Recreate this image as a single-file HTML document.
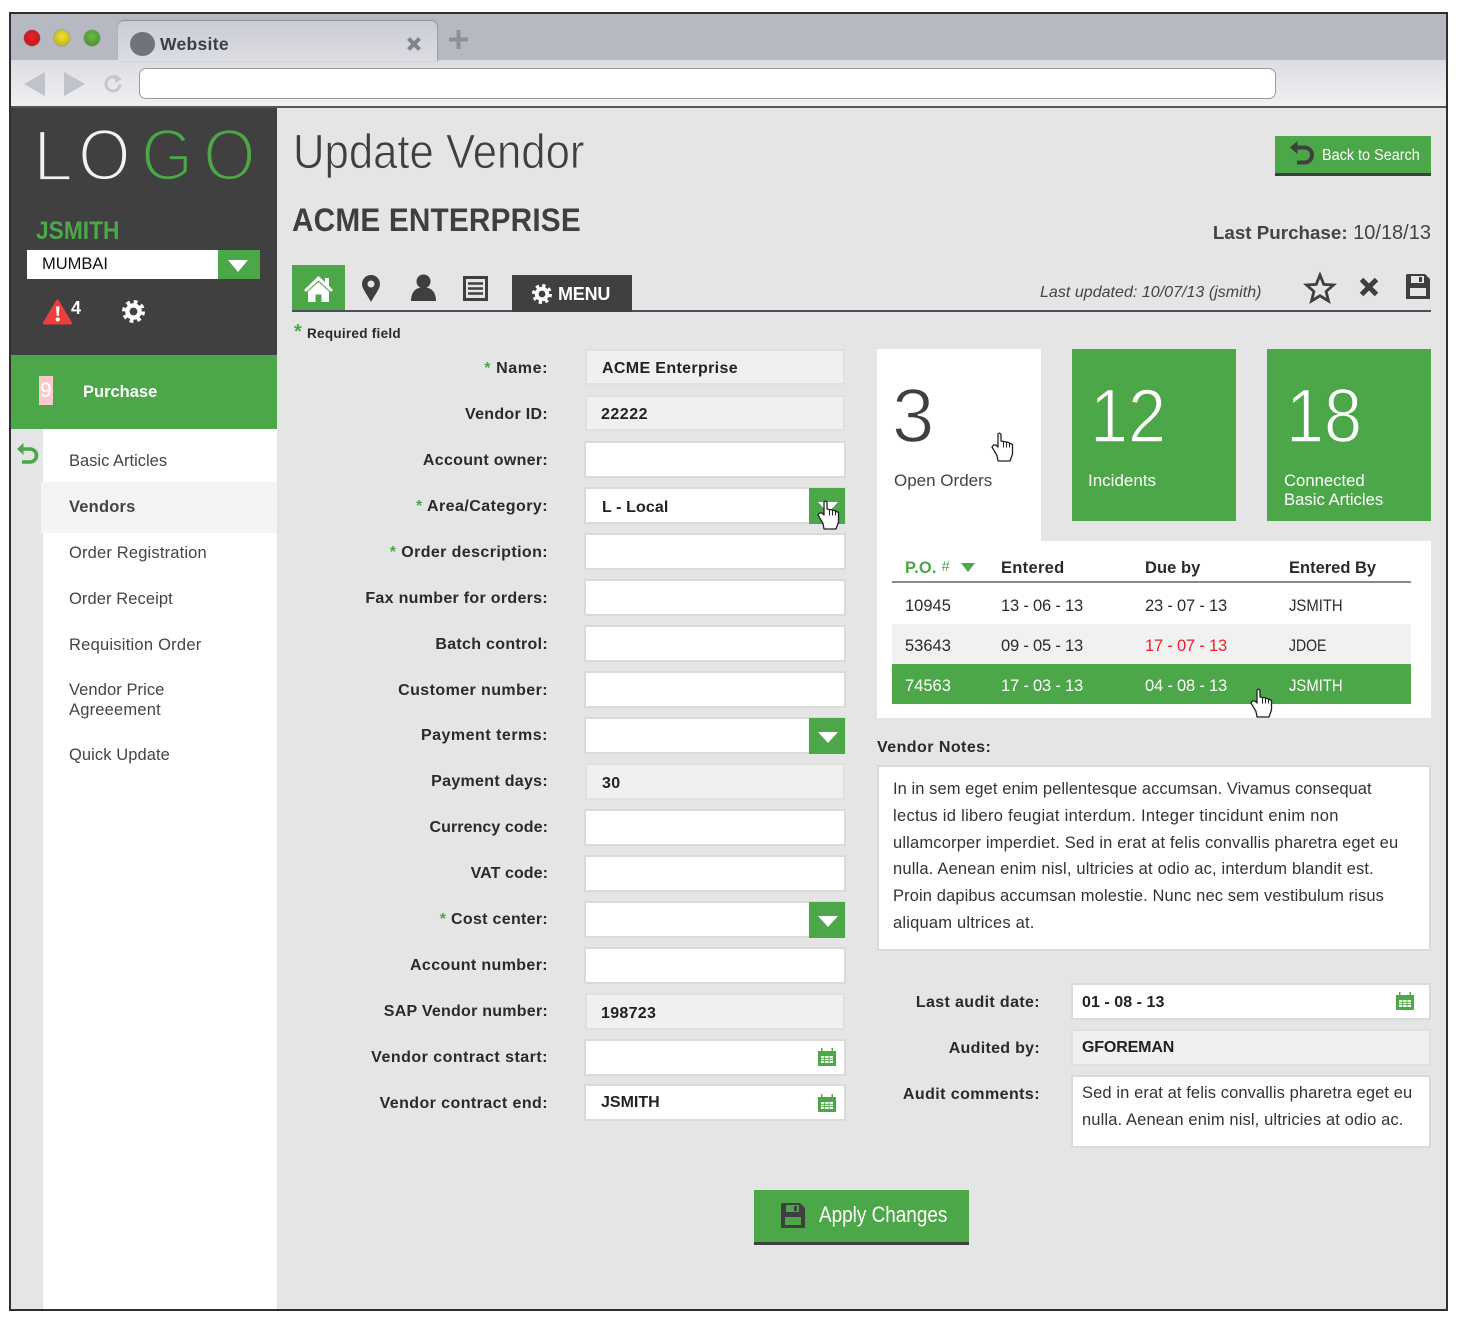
<!DOCTYPE html>
<html lang="en"><head><meta charset="utf-8"><title>Update Vendor</title>
<style>
*{box-sizing:border-box}
html,body{margin:0;padding:0;background:#fff}
body{width:1458px;height:1320px;position:relative;overflow:hidden;font-family:"Liberation Sans",sans-serif;color:#222}
.a,.t,.l,.f,.fv{position:absolute}
.t{white-space:nowrap;line-height:20px;font-size:16px;transform-origin:0 50%}
.b{font-weight:700}
.l{white-space:nowrap;line-height:20px;font-size:16px;font-weight:700;text-align:right;right:910px;color:#2a2a2a;letter-spacing:.3px;margin-top:2px}
.l i{color:#4ca748;font-style:normal}
.f{left:584px;width:262px;height:37px;background:#fff;border:2px solid #dadada}
.f.r{background:#f0f0f0;border:2px solid #e0e0e0;left:585px;width:260px}
.fv{left:602px;white-space:nowrap;line-height:20px;font-size:16px;font-weight:700;color:#222;letter-spacing:.3px;margin-top:2px}
.dd{position:absolute;left:809px;width:36px;height:36px;background:#4ca748}
.dd:after{content:"";position:absolute;left:9px;top:14px;border-left:10px solid transparent;border-right:10px solid transparent;border-top:11px solid #fff}
.m{position:absolute;left:69px;white-space:nowrap;line-height:20px;font-size:16.5px;color:#444;margin-top:1px}
.n{position:absolute;left:893px;white-space:nowrap;line-height:20px;font-size:16.5px;color:#333;margin-top:1px}
.c{position:absolute;white-space:nowrap;line-height:20px;font-size:16.5px;color:#2a2a2a;margin-top:1px;transform-origin:0 50%}
.d{letter-spacing:-.2px}
svg{position:absolute;overflow:visible}
</style></head><body>
<svg width="0" height="0" style="position:absolute"><defs>
<g id="hand"><path d="M7 2V15L5 13H2.500L1 15L6 23.500L7 29H19L21.500 22V12.500L18.500 11L15.500 10L12.500 9.500L10 9V2.500Q8.500 0 7 2Z" fill="#fff" stroke="#222" stroke-width="1.300" stroke-linejoin="round"/><path d="M12.500 9.500V15.500M15.500 10V15.500M18.500 11V15.500" fill="none" stroke="#222" stroke-width="1"/></g>
<g id="gear"><circle cx="10" cy="10" r="5.300" fill="none" stroke="currentColor" stroke-width="3.800"/><circle cx="10" cy="10" r="8.300" fill="none" stroke="currentColor" stroke-width="3.400" stroke-dasharray="3.200 3.320"/></g>
<g id="save"><path fill-rule="evenodd" d="M1 0H19L24 5V25H0V1ZM4 14V22H20V14ZM5 2V9H18V2ZM13 3H16V8H13Z" fill="currentColor"/></g>
<g id="cal"><path d="M0 3H3V0H4.500V3H13.500V0H15V3H18V18H0Z" fill="#4ca748"/><path d="M3 8H15V15H3Z" fill="#fff"/><path d="M3 10.300H15M3 12.600H15M6.700 8V15M11 8V15" stroke="#4ca748" stroke-width=".9"/></g>
</defs></svg>

<!-- window frame -->
<div class="a" style="left:9px;top:12px;width:1439px;height:1299px;background:#e5e5e5;border:2px solid #2f2f2f;border-top-width:2px"></div>
<div class="a" style="left:11px;top:14px;width:1435px;height:47px;background:#b6b9c2"></div>
<div class="a" style="left:11px;top:60px;width:1435px;height:47px;background:linear-gradient(#dcdde3,#f1f1f3)"></div>
<div class="a" style="left:11px;top:106px;width:1435px;height:2px;background:#555"></div>
<div class="a" style="left:118px;top:21px;width:319px;height:40px;border-radius:6px 6px 0 0;background:linear-gradient(#cbccd4,#dcdde3);box-shadow:0 -1px 1px #8c8f99,1px 0 1px #999ca5"></div>
<div class="a" style="left:24px;top:30px;width:16px;height:16px;border-radius:50%;background:radial-gradient(circle at 50% 40%,#e8232a,#b91419);box-shadow:0 0 1px #444"></div>
<div class="a" style="left:54px;top:30px;width:16px;height:16px;border-radius:50%;background:radial-gradient(circle at 50% 40%,#eee22f,#b9a514);box-shadow:0 0 1px #444"></div>
<div class="a" style="left:84px;top:30px;width:16px;height:16px;border-radius:50%;background:radial-gradient(circle at 50% 40%,#6dbb45,#3c8a2b);box-shadow:0 0 1px #444"></div>
<div class="a" style="left:130px;top:32px;width:25px;height:24px;border-radius:50%;background:#6e737c"></div>
<div class="t b" style="left:160px;top:34px;font-size:17.500px;color:#3d3f48;letter-spacing:.3px">Website</div>
<svg style="left:407px;top:37px" width="14" height="14"><path d="M1.500 1.500L12.500 12.500M12.500 1.500L1.500 12.500" stroke="#80838a" stroke-width="4"/></svg>
<svg style="left:449px;top:30px" width="20" height="20"><path d="M9.500 0V19M0 9.500H19" stroke="#8d9099" stroke-width="4"/></svg>
<svg style="left:24px;top:72px" width="62" height="25"><path d="M21 0V24L0 12ZM40 0V24L61 12Z" fill="#c0c3cb"/></svg>
<svg style="left:104px;top:74px" width="20" height="20"><path d="M13.500 4.500A7 7 0 1 0 16 10" fill="none" stroke="#c6c8ce" stroke-width="3"/><path d="M11 0L18 5L11 9Z" fill="#c6c8ce"/></svg>
<div class="a" style="left:139px;top:68px;width:1137px;height:31px;background:#fff;border:1.500px solid #9a9a98;border-radius:7px"></div>

<!-- sidebar -->
<div class="a" style="left:11px;top:108px;width:266px;height:247px;background:#404040"></div>
<div class="a" style="left:11px;top:355px;width:266px;height:74px;background:#4ca748"></div>
<div class="a" style="left:11px;top:429px;width:32px;height:880px;background:#e4e5e7"></div>
<div class="a" style="left:43px;top:429px;width:234px;height:880px;background:#fff"></div>
<div class="a" style="left:41px;top:482px;width:236px;height:51px;background:#f4f4f4"></div>

<svg style="left:0;top:0" width="290" height="200" font-family="Liberation Sans" font-size="72" stroke-width="2.800">
<text transform="translate(33,180.500) scale(1,1)" fill="#f2f2f2" stroke="#404040">L</text>
<text transform="translate(78,180) scale(.94,1)" fill="#f2f2f2" stroke="#404040">O</text>
<text transform="translate(141,180) scale(.93,1)" fill="#4ca748" stroke="#404040">G</text>
<text transform="translate(203,180) scale(.94,1)" fill="#4ca748" stroke="#404040">O</text>
</svg>
<div class="t b" style="left:36px;top:221px;font-size:25px;color:#4ca748;transform:scaleX(.91)">JSMITH</div>
<div class="a" style="left:27px;top:250px;width:191px;height:29px;background:#fff"></div>
<div class="a" style="left:218px;top:250px;width:42px;height:29px;background:#4ca748"></div>
<div class="a" style="left:228px;top:260px;border-left:10.500px solid transparent;border-right:10.500px solid transparent;border-top:12px solid #fff"></div>
<div class="t" style="left:42px;top:254px;font-size:16.500px;color:#111">MUMBAI</div>
<svg style="left:43px;top:299px" width="30" height="28"><path d="M14.500 2L27.500 24H1.500Z" fill="#ec3f3c" stroke="#ec3f3c" stroke-width="3" stroke-linejoin="round"/><path d="M13 7.500H16.500L15.700 17H13.800Z" fill="#fff"/><circle cx="14.700" cy="20.500" r="2" fill="#fff"/></svg>
<div class="t b" style="left:71px;top:298px;font-size:18px;color:#fff">4</div>
<svg style="left:122px;top:300px;color:#fff" width="23" height="23" viewBox="0 0 20 20"><use href="#gear"/></svg>
<div class="a" style="left:39px;top:376px;width:14px;height:29px;background:#fcc9cb"></div>
<div class="t" style="left:40px;top:380px;font-size:21px;color:#fff;line-height:22px">9</div>
<div class="t b" style="left:83px;top:382px;font-size:16.500px;color:#fff">Purchase</div>
<svg style="left:17px;top:443px" width="21" height="22"><path d="M5 6H13A6.300 6.300 0 0 1 13 19H5" fill="none" stroke="#4ca748" stroke-width="3.600"/><path d="M0 6L6.500 0V12Z" fill="#4ca748"/></svg>
<div class="m" style="top:450px">Basic Articles</div>
<div class="m b" style="top:496px;letter-spacing:.2px">Vendors</div>
<div class="m" style="top:542px;letter-spacing:.17px">Order Registration</div>
<div class="m" style="top:588px;letter-spacing:.08px">Order Receipt</div>
<div class="m" style="top:634px;letter-spacing:.24px">Requisition Order</div>
<div class="m" style="top:679px;letter-spacing:.08px">Vendor Price</div>
<div class="m" style="top:699px;letter-spacing:.2px">Agreeement</div>
<div class="m" style="top:744px;letter-spacing:.08px">Quick Update</div>

<!-- header -->
<div class="t" style="left:293px;top:126px;line-height:54px;font-size:48px;color:#3f3f3f;-webkit-text-stroke:.8px #e5e5e5;transform:scaleX(.91)">Update Vendor</div>
<div class="t b" style="left:292px;top:200px;line-height:40px;font-size:32px;color:#3f3f3f;letter-spacing:.2px;transform:scaleX(.93)">ACME ENTERPRISE</div>
<div class="a" style="left:1275px;top:136px;width:156px;height:40px;background:#4ca748;border-bottom:3px solid #3e3e3e"></div>
<svg style="left:1290px;top:141px" width="24" height="25"><path d="M6 6.500H14.500A7.500 7.500 0 0 1 14.500 21.500H7" fill="none" stroke="#3f3f3f" stroke-width="4"/><path d="M0 6.500L7.500 0V13Z" fill="#3f3f3f"/></svg>
<div class="t" style="left:1322px;top:146px;font-size:15.500px;color:#fff;transform:scaleX(.93)">Back to Search</div>
<div class="t" style="right:27px;top:223px;font-size:20px;color:#444"><span class="b" style="font-size:18.800px">Last Purchase:</span> 10/18/13</div>

<!-- tabs -->
<div class="a" style="left:292px;top:265px;width:53px;height:46px;background:#4ca748"></div>
<svg style="left:304px;top:275px" width="29" height="27"><path d="M0 15L14.500 1L21 7V3H25V11L29 15L27 17L14.500 5.500L2 17Z" fill="#fff"/><path d="M4 16.500L14.500 7L25 16.500V27H17.500V19.500H11.500V27H4Z" fill="#fff"/></svg>
<svg style="left:362px;top:275px" width="18" height="27"><path fill-rule="evenodd" d="M9 0A9 9 0 0 1 18 9C18 14 12 21 9 27C6 21 0 14 0 9A9 9 0 0 1 9 0ZM9 5.500A3.500 3.500 0 1 0 9.010 5.500Z" fill="#3f3f3f"/></svg>
<svg style="left:411px;top:274px" width="25" height="27"><circle cx="12.500" cy="7.500" r="7" fill="#3f3f3f"/><path d="M0 27C0 20 3 15 8 14H17C22 15 25 20 25 27Z" fill="#3f3f3f"/></svg>
<svg style="left:463px;top:276px" width="25" height="25"><rect width="25" height="25" fill="#3f3f3f"/><rect x="3" y="3" width="19" height="19" fill="#e5e5e5"/><path d="M5 7.500H20M5 12.500H20M5 17.500H20" stroke="#3f3f3f" stroke-width="2.400"/></svg>
<div class="a" style="left:292px;top:310px;width:1139px;height:2px;background:#4a4f60"></div>
<div class="a" style="left:512px;top:275px;width:120px;height:37px;background:#404040"></div>
<svg style="left:532px;top:284px;color:#fff" width="20" height="20" viewBox="0 0 20 20"><use href="#gear"/></svg>
<div class="t b" style="left:558px;top:284px;font-size:18px;color:#fff;letter-spacing:-.2px">MENU</div>
<div class="t" style="left:1040px;top:283px;font-size:16px;font-style:italic;color:#444;letter-spacing:.03px">Last updated: 10/07/13 (jsmith)</div>
<svg style="left:1304px;top:272px" width="32" height="31"><path d="M16 3L19.800 12.400L29.500 13L22.100 19.500L24.500 29L16 23.800L7.500 29L9.900 19.500L2.500 13L12.200 12.400Z" fill="none" stroke="#3f3f3f" stroke-width="2.800" stroke-linejoin="miter"/></svg>
<svg style="left:1359px;top:277px" width="20" height="20"><path d="M2.500 2.500L17.500 17.500M17.500 2.500L2.500 17.500" stroke="#3f3f3f" stroke-width="5"/></svg>
<svg style="left:1406px;top:274px;color:#3f3f3f" width="25" height="25"><use href="#save"/></svg>

<div class="t b" style="left:294px;top:322px;font-size:20px;color:#4ca748">*</div>
<div class="t b" style="left:307px;top:324px;font-size:13.500px;color:#2a2a2a;letter-spacing:.28px">Required field</div>

<!-- form -->
<div class="l" style="top:357px;letter-spacing:.6px"><i>*</i> Name:</div>
<div class="f r" style="top:349px;height:36px"></div><div class="fv" style="top:357px;letter-spacing:.35px">ACME Enterprise</div>
<div class="l" style="top:403px">Vendor ID:</div>
<div class="f r" style="top:395px;height:36px"></div><div class="fv" style="top:403px;left:601px;letter-spacing:.5px">22222</div>
<div class="l" style="top:449px">Account owner:</div>
<div class="f" style="top:441px"></div>
<div class="l" style="top:495px;letter-spacing:.45px"><i>*</i> Area/Category:</div>
<div class="f" style="top:487px"></div><div class="fv" style="top:496px;letter-spacing:.1px">L - Local</div><div class="dd" style="top:488px"></div>
<div class="l" style="top:541px;letter-spacing:.4px"><i>*</i> Order description:</div>
<div class="f" style="top:533px"></div>
<div class="l" style="top:587px">Fax number for orders:</div>
<div class="f" style="top:579px"></div>
<div class="l" style="top:633px">Batch control:</div>
<div class="f" style="top:625px"></div>
<div class="l" style="top:679px;letter-spacing:.42px">Customer number:</div>
<div class="f" style="top:671px"></div>
<div class="l" style="top:724px;letter-spacing:.5px">Payment terms:</div>
<div class="f" style="top:717px"></div><div class="dd" style="top:718px"></div>
<div class="l" style="top:770px">Payment days:</div>
<div class="f r" style="top:763px"></div><div class="fv" style="top:772px">30</div>
<div class="l" style="top:816px;letter-spacing:.08px">Currency code:</div>
<div class="f" style="top:809px"></div>
<div class="l" style="top:862px;letter-spacing:.07px">VAT code:</div>
<div class="f" style="top:855px"></div>
<div class="l" style="top:908px"><i>*</i> Cost center:</div>
<div class="f" style="top:901px"></div><div class="dd" style="top:902px"></div>
<div class="l" style="top:954px;letter-spacing:.37px">Account number:</div>
<div class="f" style="top:947px"></div>
<div class="l" style="top:1000px;letter-spacing:.25px">SAP Vendor number:</div>
<div class="f r" style="top:993px"></div><div class="fv" style="top:1002px;left:601px">198723</div>
<div class="l" style="top:1046px;letter-spacing:.48px">Vendor contract start:</div>
<div class="f" style="top:1039px"></div>
<svg style="left:818px;top:1048px" width="18" height="18"><use href="#cal"/></svg>
<div class="l" style="top:1092px;letter-spacing:.42px">Vendor contract end:</div>
<div class="f" style="top:1084px"></div><div class="fv" style="top:1091px;left:601px;letter-spacing:0">JSMITH</div>
<svg style="left:818px;top:1094px" width="18" height="18"><use href="#cal"/></svg>
<svg style="left:817px;top:500px" width="26" height="32"><use href="#hand"/></svg>

<!-- tiles -->
<div class="a" style="left:877px;top:349px;width:164px;height:193px;background:#fff"></div>
<div class="a" style="left:1072px;top:349px;width:164px;height:172px;background:#4ca748"></div>
<div class="a" style="left:1267px;top:349px;width:164px;height:172px;background:#4ca748"></div>
<div class="t" style="left:892px;top:377px;line-height:80px;font-size:76px;color:#3f3f3f;-webkit-text-stroke:1.500px #fff">3</div>
<div class="t" style="left:1090px;top:377px;line-height:80px;font-size:76px;color:#fff;-webkit-text-stroke:1.500px #4ca748;transform:scaleX(.9)">12</div>
<div class="t" style="left:1286px;top:377px;line-height:80px;font-size:76px;color:#fff;-webkit-text-stroke:1.500px #4ca748;transform:scaleX(.9)">18</div>
<div class="t" style="left:894px;top:471px;font-size:17px;color:#444">Open Orders</div>
<div class="t" style="left:1088px;top:471px;font-size:17px;color:#fff">Incidents</div>
<div class="t" style="left:1284px;top:471px;font-size:16.700px;color:#fff;line-height:19px">Connected<br>Basic Articles</div>
<svg style="left:991px;top:432px" width="24" height="30"><use href="#hand"/></svg>

<!-- table -->
<div class="a" style="left:877px;top:541px;width:554px;height:177px;background:#fff"></div>
<div class="c b" style="left:905px;top:557px;color:#4ca748;letter-spacing:.2px">P.O. <span style="font-size:15px;position:relative;top:-2px;font-weight:400">#</span></div>
<div class="a" style="left:961px;top:563px;border-left:7.500px solid transparent;border-right:7.500px solid transparent;border-top:9px solid #4ca748"></div>
<div class="c b" style="left:1001px;top:557px;letter-spacing:.3px">Entered</div>
<div class="c b" style="left:1145px;top:557px;letter-spacing:.05px">Due by</div>
<div class="c b" style="left:1289px;top:557px;letter-spacing:0">Entered By</div>
<div class="a" style="left:892px;top:581px;width:519px;height:2px;background:#8a8a8a"></div>
<div class="a" style="left:892px;top:624px;width:519px;height:40px;background:#f1f1f1"></div>
<div class="a" style="left:892px;top:664px;width:519px;height:40px;background:#4ca748"></div>
<div class="c" style="left:905px;top:595px">10945</div><div class="c d" style="left:1001px;top:595px">13 - 06 - 13</div><div class="c d" style="left:1145px;top:595px">23 - 07 - 13</div><div class="c" style="left:1289px;top:595px;transform:scaleX(.9)">JSMITH</div>
<div class="c" style="left:905px;top:635px">53643</div><div class="c d" style="left:1001px;top:635px">09 - 05 - 13</div><div class="c d" style="left:1145px;top:635px;color:#e8202c">17 - 07 - 13</div><div class="c" style="left:1289px;top:635px;transform:scaleX(.85)">JDOE</div>
<div class="c" style="left:905px;top:675px;color:#fff">74563</div><div class="c d" style="left:1001px;top:675px;color:#fff">17 - 03 - 13</div><div class="c d" style="left:1145px;top:675px;color:#fff">04 - 08 - 13</div><div class="c" style="left:1289px;top:675px;color:#fff;transform:scaleX(.9)">JSMITH</div>
<svg style="left:1250px;top:688px" width="24" height="30"><use href="#hand"/></svg>

<!-- notes -->
<div class="t b" style="left:877px;top:738px;color:#2a2a2a;letter-spacing:.45px">Vendor Notes:</div>
<div class="a" style="left:877px;top:765px;width:554px;height:186px;background:#fff;border:2px solid #dadada"></div>
<div class="n" style="top:778px;letter-spacing:.065px">In in sem eget enim pellentesque accumsan. Vivamus consequat</div>
<div class="n" style="top:805px;letter-spacing:.3px">lectus id libero feugiat interdum. Integer tincidunt enim non</div>
<div class="n" style="top:832px;letter-spacing:.17px">ullamcorper imperdiet. Sed in erat at felis convallis pharetra eget eu</div>
<div class="n" style="top:858px;letter-spacing:.18px">nulla. Aenean enim nisl, ultricies at odio ac, interdum blandit est.</div>
<div class="n" style="top:885px;letter-spacing:.11px">Proin dapibus accumsan molestie. Nunc nec sem vestibulum risus</div>
<div class="n" style="top:912px;letter-spacing:.2px">aliquam ultrices at.</div>

<!-- audit -->
<div class="l" style="top:991px;right:418px;letter-spacing:.37px">Last audit date:</div>
<div class="a" style="left:1071px;top:983px;width:360px;height:37px;background:#fff;border:2px solid #dadada"></div>
<div class="fv" style="left:1082px;top:991px;letter-spacing:.05px">01 - 08 - 13</div>
<svg style="left:1396px;top:992px" width="18" height="18"><use href="#cal"/></svg>
<div class="l" style="top:1037px;right:418px">Audited by:</div>
<div class="a" style="left:1071px;top:1029px;width:360px;height:37px;background:#f0f0f0;border:2px solid #e0e0e0"></div>
<div class="fv" style="left:1082px;top:1036px;letter-spacing:-.15px">GFOREMAN</div>
<div class="l" style="top:1083px;right:418px;letter-spacing:.43px">Audit comments:</div>
<div class="a" style="left:1071px;top:1075px;width:360px;height:73px;background:#fff;border:2px solid #dadada"></div>
<div class="n" style="left:1082px;top:1082px;letter-spacing:.1px">Sed in erat at felis convallis pharetra eget eu</div>
<div class="n" style="left:1082px;top:1109px;letter-spacing:.13px">nulla. Aenean enim nisl, ultricies at odio ac.</div>

<!-- apply -->
<div class="a" style="left:754px;top:1190px;width:215px;height:55px;background:#4ca748;border-bottom:3px solid #3e3e3e"></div>
<svg style="left:781px;top:1203px;color:#3f3f3f" width="25" height="25"><use href="#save"/></svg>
<div class="t" style="left:819px;top:1205px;font-size:22px;color:#fff;transform:scaleX(.86)">Apply Changes</div>
</body></html>
